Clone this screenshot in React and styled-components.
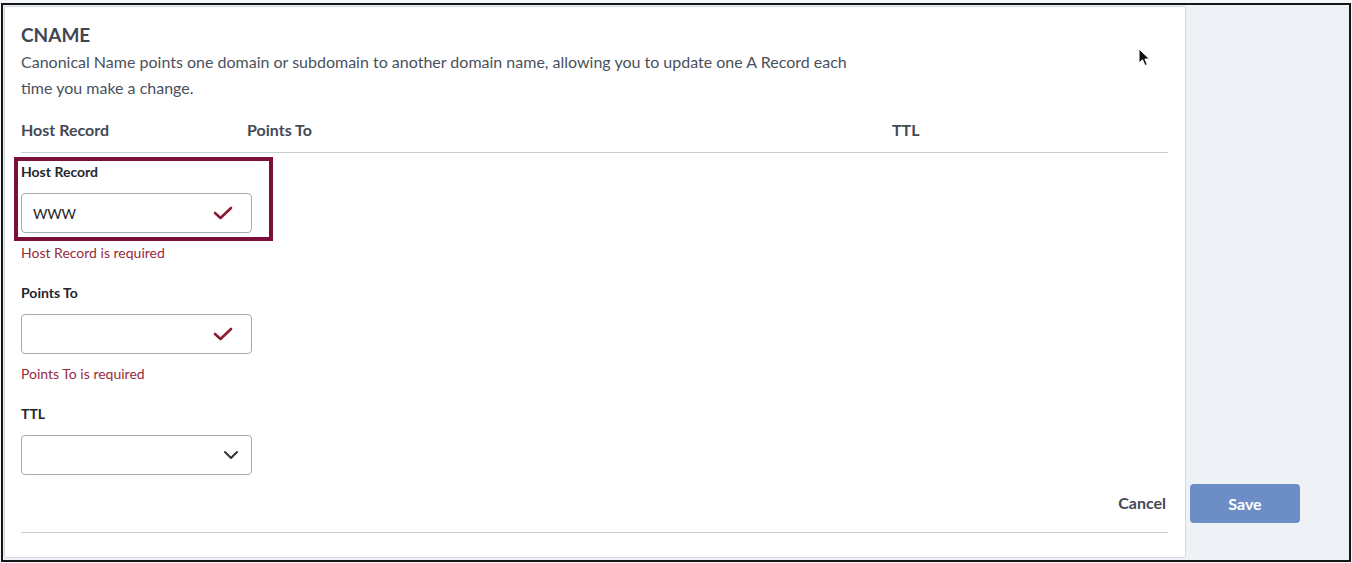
import React from 'react'
import styled, { createGlobalStyle } from 'styled-components'

const GlobalStyle = createGlobalStyle`
	html, body {
		margin: 0;
		padding: 0;
		background: #f5f6f8;
		font-family: Lato, "Open Sans", Arial, sans-serif;
	}
	* {
		box-sizing: border-box;
	}
`;

const CheckIcon = () => (
	<svg width="20" height="14" viewBox="0 0 20 14" fill="none">
		<polyline points="2,7 7.5,12 18,2" stroke="#8c1a33" strokeWidth="2.6" strokeLinecap="round" strokeLinejoin="round" />
	</svg>
);

const ChevronIcon = () => (
	<svg width="16" height="10" viewBox="0 0 16 10" fill="none">
		<polyline points="2,2 8,8 14,2" stroke="#2f343b" strokeWidth="2" strokeLinecap="round" strokeLinejoin="round" />
	</svg>
);

const Field = ({ label, value, error, select }) => (
	<FieldBlock>
		<Label>{label}</Label>
		<InputShell select={select}>
			<InputText>{value}</InputText>
			{ select ? <ChevronIcon /> : <CheckIcon /> }
		</InputShell>
		{ error && <ErrorText>{error}</ErrorText> }
	</FieldBlock>
);

export default function App() {
	return (
		<>
			<GlobalStyle />
			<Frame>
				<Card>
					<Title>CNAME</Title>
					<Description>
						Canonical Name points one domain or subdomain to another domain name, allowing you to update one A Record each time you make a change.
					</Description>

					<HeaderRow>
						<HeaderCell>Host Record</HeaderCell>
						<HeaderCell>Points To</HeaderCell>
						<HeaderCell>TTL</HeaderCell>
					</HeaderRow>

					<Highlight>
						<Label>Host Record</Label>
						<InputShell>
							<InputText>WWW</InputText>
							<CheckIcon />
						</InputShell>
					</Highlight>
					<ErrorText first>Host Record is required</ErrorText>

					<Field label="Points To" value="" error="Points To is required" />
					<Field label="TTL" value="" select />

					<Actions>
						<CancelButton>Cancel</CancelButton>
					</Actions>
					<BottomRule />
				</Card>

				<SideColumn>
					<SaveButton>Save</SaveButton>
				</SideColumn>

				<Cursor width="14" height="20" viewBox="0 0 14 20">
					<path d="M1 1 L1 15 L4.5 11.8 L7 17.5 L9.3 16.5 L6.9 11 L11.5 11 Z" fill="#111" stroke="#fff" strokeWidth="1" />
				</Cursor>
			</Frame>
		</>
	)
}

const Frame = styled.div`
	position: relative;
	margin: 3px 1px 1px 1px;
	height: 559px;
	border: 2px solid #161616;
	background: #eef1f5;
	padding: 1px 0 2px 1px;
	display: grid;
	grid-template-columns: 1182px 1fr;
`;

const Card = styled.div`
	background: #fff;
	border: 1px solid #d3d8de;
	border-radius: 0 0 3px 3px;
	padding: 16px 17px 24px 16px;
	display: flex;
	flex-direction: column;
`;

const Title = styled.h2`
	margin: -1px 0 0;
	font-size: 19px;
	line-height: 26px;
	font-weight: 700;
	color: #404754;
`;

const Description = styled.p`
	margin: 1px 0 0;
	max-width: 850px;
	font-size: 16px;
	line-height: 26px;
	color: #4a515d;
`;

const HeaderRow = styled.div`
	display: grid;
	grid-template-columns: 226px 645px 1fr;
	margin-top: 19px;
	padding-bottom: 12px;
	border-bottom: 1px solid #c9ced5;
`;

const HeaderCell = styled.div`
	font-size: 16px;
	line-height: 20px;
	font-weight: 700;
	color: #434a56;
`;

const Highlight = styled.div`
	align-self: flex-start;
	margin: 4px 0 0 -7px;
	padding: 2px 17px 4px 3px;
	border: 4px solid #7b0f3a;
`;

const FieldBlock = styled.div`
	display: flex;
	flex-direction: column;
	align-items: flex-start;
	margin-top: 22px;
`;

const Label = styled.div`
	font-size: 14px;
	line-height: 18px;
	font-weight: 700;
	color: #23272d;
	margin-bottom: 12px;
`;

const InputShell = styled.div.withConfig({ shouldForwardProp: prop => prop !== 'select' })`
	width: 231px;
	height: 40px;
	border: 1px solid #a4aab2;
	border-radius: 4px;
	background: #fff;
	display: flex;
	align-items: center;
	justify-content: space-between;
	padding: 0 ${props => props.select ? '12px' : '18px'} 0 11px;
`;

const InputText = styled.span`
	font-size: 14px;
	letter-spacing: -0.3px;
	color: #1f2328;
`;

const ErrorText = styled.div`
	margin-top: ${props => props.first ? '3px' : '11px'};
	font-size: 14px;
	line-height: 18px;
	color: #9a2a3d;
`;

const Actions = styled.div`
	display: flex;
	justify-content: flex-end;
	align-items: center;
	height: 39px;
	margin-top: 8px;
`;

const CancelButton = styled.button`
	border: none;
	background: none;
	padding: 0 2px 0 0;
	font-family: inherit;
	font-size: 16px;
	font-weight: 700;
	color: #434a56;
	cursor: pointer;
`;

const BottomRule = styled.div`
	margin-top: 10px;
	border-top: 1px solid #c9ced5;
`;

const SideColumn = styled.div`
	display: flex;
	align-items: flex-end;
	padding: 0 0 35px 4px;
`;

const SaveButton = styled.button`
	width: 110px;
	height: 39px;
	border: none;
	border-radius: 4px;
	background: #6c8dc5;
	color: #fff;
	font-family: inherit;
	font-size: 16px;
	font-weight: 700;
	cursor: pointer;
`;

const Cursor = styled.svg`
	position: absolute;
	left: 1135px;
	top: 43px;
`;
